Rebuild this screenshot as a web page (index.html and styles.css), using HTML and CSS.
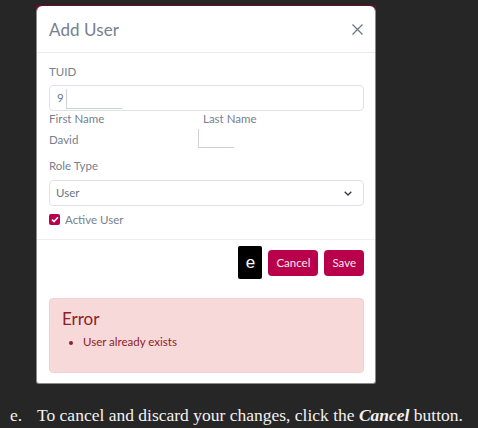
FILE: index.html
```html
<!DOCTYPE html>
<html>
<head>
<meta charset="utf-8">
<link rel="stylesheet" href="styles.css">
</head>
<body>
<div class="frame">
  <div class="modal">
    <div class="modal-header">
      <h5 class="modal-title">Add User</h5>
      <svg class="close" width="11" height="11" viewBox="0 0 11 11"><path d="M0.5 0.5L10.5 10.5M10.5 0.5L0.5 10.5" stroke="#6c7480" stroke-width="1.2" fill="none"/></svg>
    </div>
    <div class="modal-body">
      <div class="label first">TUID</div>
      <div class="input">
        <span class="val">9</span><span class="inner wide"></span>
      </div>
      <div class="names">
        <div class="col">
          <div class="label">First Name</div>
          <div class="plain">David</div>
        </div>
        <div class="col col2">
          <div class="label">Last Name</div>
          <span class="inner small"></span>
        </div>
      </div>
      <div class="label role">Role Type</div>
      <div class="input select">
        <span class="val">User</span>
        <svg width="8" height="5" viewBox="0 0 8 5"><path d="M0.7 0.7L4 4L7.3 0.7" stroke="#343a40" stroke-width="1.3" fill="none"/></svg>
      </div>
      <div class="check-row">
        <span class="checkbox"><svg width="8" height="7" viewBox="0 0 8 7"><path d="M1 3.6L3 5.5L7 1.2" stroke="#fff" stroke-width="1.6" fill="none"/></svg></span>
        <span class="check-label">Active User</span>
      </div>
    </div>
    <div class="modal-footer">
      <span class="key">e</span>
      <button class="btn">Cancel</button>
      <button class="btn">Save</button>
    </div>
    <div class="alert">
      <div class="alert-title">Error</div>
      <ul><li>User already exists</li></ul>
    </div>
  </div>
</div>
<p class="step"><span class="num">e.</span>To cancel and discard your changes, click the <b><i>Cancel</i></b> button.</p>
</body>
</html>
```
FILE: styles.css
```css
html, body { margin: 0; padding: 0; }
body {
  background: #262626;
  width: 478px;
  height: 428px;
  overflow: hidden;
  font-family: Lato, "Noto Sans", sans-serif;
}
.frame {
  margin: 5px 0 0 36px;
  width: 340px;
  background: linear-gradient(#6a0c26 0 24px, transparent 24px);
  padding-top: 1px;
}
.modal {
  background: #fff;
  border: 1px solid #8a8a8a;
  border-top: none;
  border-radius: 6px 6px 3px 3px;
  padding-bottom: 10px;
}
.modal-header {
  height: 46px;
  display: flex;
  align-items: center;
  justify-content: space-between;
  padding: 0 12px 0 12px;
  border-bottom: 1px solid #e9ecef;
}
.modal-title {
  margin: 0;
  font-weight: 400;
  font-size: 17px;
  color: #78808e;
  letter-spacing: 0.1px;
}
.close { margin-top: 1px; }
.modal-body {
  padding: 0 11px 13px 12px;
}
.label {
  font-size: 11.5px;
  line-height: 14px;
  color: #78808e;
}
.label.first { margin-top: 12px; margin-bottom: 6px; }
.input {
  height: 24px;
  border: 1px solid #dfe2ea;
  border-radius: 4px;
  display: flex;
  align-items: center;
  padding: 0 7px;
  font-size: 11.5px;
  color: #6c7480;
}
.val { line-height: 14px; }
.inner {
  display: inline-block;
  border-left: 1px solid #cfd2d8;
  border-bottom: 1px solid #cfd2d8;
}
.inner.wide { width: 55px; height: 19px; margin-left: 2px; margin-top: 2px; }
.names {
  display: grid;
  grid-template-columns: 149px 1fr;
  margin-top: 1px;
}
.col2 .label { padding-left: 5px; }
.plain {
  font-size: 11.5px;
  line-height: 14px;
  color: #78808e;
  margin-top: 7px;
}
.inner.small { width: 35px; height: 18px; margin-top: 3px; }
.label.role { margin-top: 8px; margin-bottom: 7px; }
.select {
  justify-content: space-between;
  padding: 0 11px 0 6px;
  height: 24px;
}
.check-row {
  display: flex;
  align-items: center;
  margin-top: 6px;
  height: 14px;
}
.checkbox {
  width: 11px;
  height: 11px;
  border-radius: 2px;
  background: #b8004b;
  display: flex;
  align-items: center;
  justify-content: center;
  margin-right: 5px;
}
.check-label { font-size: 11.5px; color: #78808e; }
.modal-footer {
  border-top: 1px solid #eceef2;
  display: flex;
  justify-content: flex-end;
  align-items: center;
  gap: 6px;
  padding: 6px 11px 6px 11px;
}
.key {
  width: 24px;
  height: 33px;
  background: #000;
  color: #fff;
  font-family: "Liberation Sans", Arial, sans-serif;
  font-size: 17px;
  display: flex;
  align-items: center;
  justify-content: center;
  border-radius: 2px;
}
.btn {
  height: 26px;
  border: none;
  border-radius: 4px;
  background: #b8004b;
  color: #fbe8ef;
  font-family: Lato, "Noto Sans", sans-serif;
  font-size: 11.5px;
  padding: 0 8px;
}
.alert {
  margin: 13px 11px 0 12px;
  height: 75px;
  box-sizing: border-box;
  background: #f8d9d9;
  border: 1px solid #f4cfd0;
  border-radius: 4px;
  padding: 10px 12px;
  color: #8b2229;
}
.alert-title {
  font-size: 17px;
  line-height: 20px;
}
.alert ul {
  margin: 6px 0 0 0;
  padding-left: 21px;
  font-size: 11.5px;
  line-height: 14px;
}
.step {
  margin: 20px 0 0 0;
  color: #f2f2f2;
  font-family: "Liberation Serif", "Times New Roman", serif;
  font-size: 17.5px;
  line-height: 22px;
  white-space: nowrap;
}
.num { display: inline-block; width: 27px; padding-left: 10px; }
```
